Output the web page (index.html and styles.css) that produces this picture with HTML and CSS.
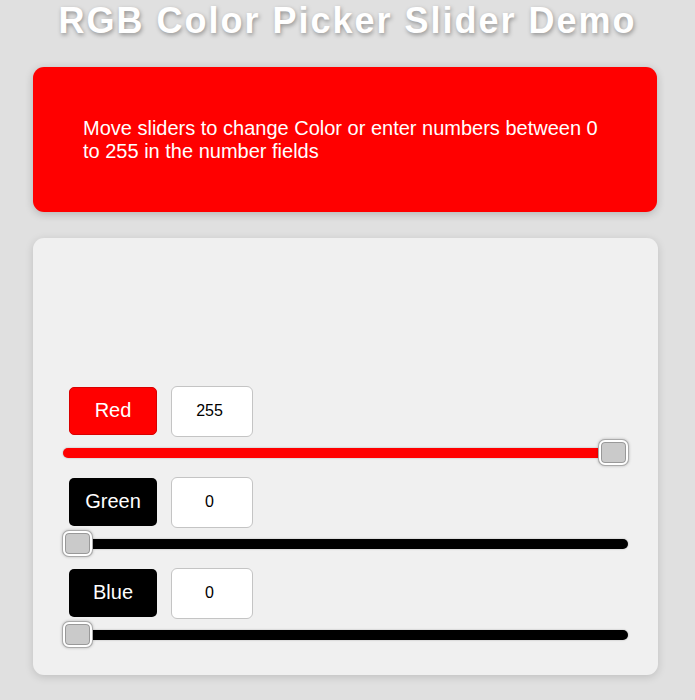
FILE: index.html
```html
<!DOCTYPE html>
<html>
<head>
<meta charset="utf-8">
<title>RGB Color Picker Slider Demo</title>
<link rel="stylesheet" href="styles.css">
</head>
<body>
<h1 class="title">RGB Color Picker Slider Demo</h1>
<div class="preview">
  <p class="preview-text">Move sliders to change Color or enter numbers between 0 to 255 in the number fields</p>
</div>
<div class="panel">
  <div class="channel">
    <div class="channel-head">
      <span class="channel-label red">Red</span>
      <input class="channel-num" type="text" value="255">
    </div>
    <input class="slider slider-red" type="range" min="0" max="255" value="255">
  </div>
  <div class="channel">
    <div class="channel-head">
      <span class="channel-label dark">Green</span>
      <input class="channel-num" type="text" value="0">
    </div>
    <input class="slider" type="range" min="0" max="255" value="0">
  </div>
  <div class="channel">
    <div class="channel-head">
      <span class="channel-label dark">Blue</span>
      <input class="channel-num" type="text" value="0">
    </div>
    <input class="slider" type="range" min="0" max="255" value="0">
  </div>
</div>
</body>
</html>
```
FILE: styles.css
```css
html, body {
  margin: 0;
  padding: 0;
}
body {
  background: #e0e0e0;
  font-family: "Liberation Sans", Arial, sans-serif;
  height: 700px;
  overflow: hidden;
}
.title {
  margin: 0;
  height: 67px;
  line-height: 42px;
  text-align: center;
  font-size: 36px;
  letter-spacing: 2px;
  font-weight: bold;
  color: #fff;
  text-shadow: 1px 2px 4px rgba(0, 0, 0, 0.35);
}
.preview {
  margin-left: 33px;
  width: 624px;
  box-sizing: border-box;
  height: 145px;
  background: #ff0000;
  border-radius: 11px;
  box-shadow: 0 2px 8px rgba(0, 0, 0, 0.2);
  padding: 50px 50px;
}
.preview-text {
  margin: 0;
  color: #fff;
  font-size: 20px;
  line-height: 23px;
}
.panel {
  margin-top: 26px;
  margin-left: 33px;
  width: 625px;
  height: 437px;
  box-sizing: border-box;
  background: #f0f0f0;
  border-radius: 11px;
  box-shadow: 0 2px 8px rgba(0, 0, 0, 0.15);
  padding: 148px 0 0 31px;
  display: flex;
  flex-direction: column;
  gap: 12px;
}
.channel {
  display: flex;
  flex-direction: column;
  gap: 4px;
}
.channel-head {
  display: flex;
  align-items: center;
  gap: 14px;
  padding-left: 5px;
  height: 50px;
}
.channel-label {
  width: 88px;
  height: 48px;
  box-sizing: border-box;
  border-radius: 5px;
  color: #fff;
  font-size: 20px;
  padding-bottom: 2px;
  display: flex;
  align-items: center;
  justify-content: center;
}
.channel-label.red {
  background: #ff0000;
  border: 1px solid #d80000;
}
.channel-label.dark {
  background: #000;
}
.channel-num {
  width: 82px;
  height: 51px;
  box-sizing: border-box;
  border: 1px solid #c4c4c4;
  border-radius: 6px;
  background: #fff;
  text-align: center;
  font-family: "Liberation Sans", Arial, sans-serif;
  font-size: 16px;
  color: #000;
  padding: 0 5px 0 0;
  outline: none;
}
.slider {
  -webkit-appearance: none;
  appearance: none;
  width: 565px;
  height: 25px;
  margin: 0 0 0 -1px;
  padding: 0;
  background: transparent;
}
.slider::-webkit-slider-runnable-track {
  height: 10px;
  border-radius: 5px;
  background: #000;
  box-shadow: 0 0 2px rgba(0, 0, 0, 0.3);
}
.slider-red::-webkit-slider-runnable-track {
  background: #ff0000;
}
.slider::-webkit-slider-thumb {
  -webkit-appearance: none;
  appearance: none;
  width: 29px;
  height: 25px;
  margin-top: -7.5px;
  box-sizing: border-box;
  border-radius: 6px;
  background: #cacaca;
  border: 2px solid #fff;
  box-shadow: 0 0 0 1px #aaa, 0 0 3px 1px rgba(0, 0, 0, 0.25), inset 0 0 0 1px #999;
}
```
